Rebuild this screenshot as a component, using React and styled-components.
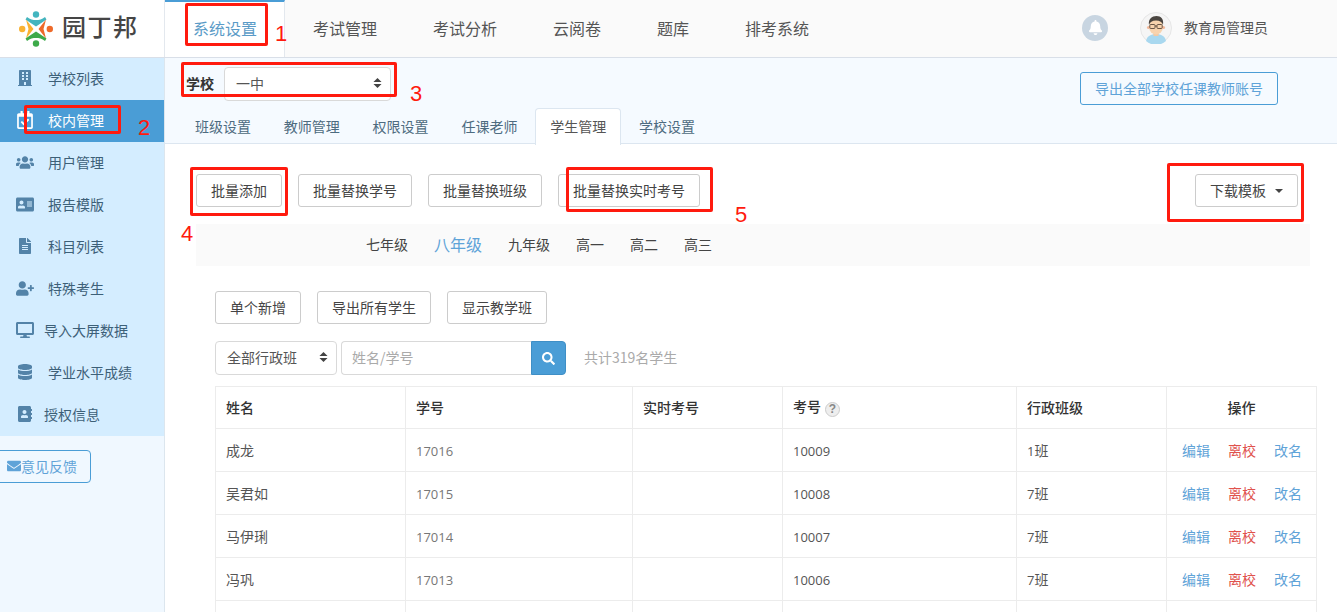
import React from "react";
import styled, { createGlobalStyle } from "styled-components";
import {
  FaBuilding, FaRegCalendarCheck, FaUsers, FaAddressCard, FaFileAlt, FaUserPlus,
  FaDesktop, FaDatabase, FaAddressBook, FaEnvelope, FaSearch, FaBell,
} from "react-icons/fa";

const Global = createGlobalStyle`
  html, body { margin: 0; padding: 0; background: #fff; }
  body { font-family: "Noto Sans CJK SC", "Noto Sans", sans-serif; font-size: 14px; color: #444; }
  * { box-sizing: border-box; }
`;

const Page = styled.div`
  position: relative;
  width: 1337px;
  height: 612px;
  overflow: hidden;
`;
const Header = styled.header`
  display: flex;
  height: 58px;
  background: #fafafa;
  border-bottom: 1px solid #d9dfe8;
`;
const LogoBox = styled.div`
  width: 165px;
  background: #fff;
  border-right: 1px solid #e3e8ee;
  display: flex;
  align-items: center;
  padding-left: 19px;
  gap: 9px;
`;
const LogoText = styled.span`
  font-size: 24px;
  font-weight: 500;
  color: #454545;
  letter-spacing: 1.5px;
  white-space: nowrap;
  line-height: 1;
  padding-bottom: 5px;
`;
const Nav = styled.nav`
  display: flex;
  flex: 1;
`;
const NavItem = styled.div`
  padding: 0 28px;
  font-size: 16px;
  line-height: 52px;
  height: 57px;
  white-space: nowrap;
  color: ${(p) => (p.$active ? "#5a9bc7" : "#555")};
  background: ${(p) => (p.$active ? "#fff" : "transparent")};
  border-top: 2px solid ${(p) => (p.$active ? "#4a9dd6" : "transparent")};
  ${(p) => p.$active && "border-right: 1px solid #e3e8ee; width: 120px; padding-right: 0;"}
`;
const UserArea = styled.div`
  display: flex;
  align-items: center;
  padding: 0 69px 2px 0;
`;
const BellBadge = styled.div`
  width: 26px;
  height: 26px;
  border-radius: 50%;
  background: #c8d5e1;
  color: #fff;
  display: flex;
  align-items: center;
  justify-content: center;
  font-size: 15px;
  margin-right: 32px;
`;
const UserName = styled.span`
  margin-left: 12px;
  padding-bottom: 1px;
  color: #555;
  font-size: 14px;
  white-space: nowrap;
`;
const Body = styled.div`
  display: flex;
  height: 554px;
`;
const Sidebar = styled.aside`
  width: 165px;
  flex: none;
  background: #f0f8ff;
  border-right: 1px solid #dce6ee;
`;
const SideList = styled.div`
  background: #d4edff;
`;
const SideItem = styled.div`
  display: flex;
  align-items: center;
  height: 42px;
  padding: 0 0 2px 16px;
  background: ${(p) => (p.$active ? "#4a9dd6" : "transparent")};
  color: ${(p) => (p.$active ? "#fff" : "#3d6078")};
  font-size: 14px;
  white-space: nowrap;
`;
const SideIcon = styled.span`
  width: 18px;
  margin-right: ${(p) => (p.$tight ? 10 : 14)}px;
  display: flex;
  justify-content: center;
  font-size: ${(p) => p.$size || 17}px;
  color: ${(p) => (p.$active ? "#fff" : "#5383a8")};
`;
const FeedbackButton = styled.button`
  display: flex;
  align-items: center;
  margin: 14px 0 0 -10px;
  width: 101px;
  height: 33px;
  padding: 0 0 2px 16px;
  border: 1px solid #4a9dd6;
  border-radius: 4px;
  background: transparent;
  color: #5fa3d8;
  font: inherit;
  font-size: 14px;
  white-space: nowrap;
`;
const Main = styled.main`
  flex: 1;
  min-width: 0;
`;
const SubHeader = styled.div`
  height: 86px;
  background: #f5faff;
  border-bottom: 1px solid #dce6f0;
  padding-top: 9px;
`;
const SchoolRow = styled.div`
  display: flex;
  justify-content: space-between;
  align-items: flex-start;
  height: 41px;
  padding: 0 59px 0 21px;
`;
const SchoolPick = styled.div`
  display: flex;
  align-items: center;
  gap: 10px;
`;
const SchoolLabel = styled.label`
  font-weight: 700;
  font-size: 14px;
  color: #333;
  padding-bottom: 2px;
`;
const SelectBox = styled.div`
  display: flex;
  align-items: center;
  justify-content: space-between;
  width: ${(p) => p.$width}px;
  height: 34px;
  padding: 0 8px 2px 11px;
  background: #fff;
  border: 1px solid #d9d9d9;
  border-radius: 4px;
  font-size: 14px;
  color: #555;
  white-space: nowrap;
`;
const ExportAll = styled.button`
  margin-top: 5px;
  width: 198px;
  height: 33px;
  background: transparent;
  border: 1px solid #4a9dd6;
  border-radius: 3px;
  color: #5fa3d8;
  font: inherit;
  font-size: 14px;
  padding: 0 0 1px;
`;
const Tabs = styled.div`
  display: flex;
  padding-left: 15px;
`;
const Tab = styled.div`
  width: 86px;
  height: 36px;
  margin-right: 2.8px;
  line-height: 35px;
  text-align: center;
  font-size: 14px;
  white-space: nowrap;
  color: ${(p) => (p.$active ? "#555" : "#4d6b80")};
  background: ${(p) => (p.$active ? "#fff" : "transparent")};
  border: 1px solid ${(p) => (p.$active ? "#dce6f0" : "transparent")};
  border-bottom: 0;
  border-radius: 4px 4px 0 0;
  ${(p) => p.$active && "position: relative; height: 37px;"}
`;
const Content = styled.div`
  padding: 30px 20px 0 50px;
`;
const ButtonRow = styled.div`
  display: flex;
  gap: 16px;
`;
const BatchRow = styled.div`
  display: flex;
  justify-content: space-between;
  margin: 0 19px 0 -19px;
`;
const Btn = styled.button`
  height: 33px;
  padding: 0 14px 2px;
  background: #fff;
  border: 1px solid #ccc;
  border-radius: 3px;
  color: #444;
  font: inherit;
  font-size: 14px;
  white-space: nowrap;
  display: flex;
  align-items: center;
`;
const Caret = styled.span`
  width: 0;
  height: 0;
  margin: 2px 0 0 9px;
  border-top: 4px solid #444;
  border-left: 4px solid transparent;
  border-right: 4px solid transparent;
`;
const GradeBar = styled.div`
  display: flex;
  align-items: center;
  gap: 26px;
  height: 42px;
  margin: 17px 7px 25px -19px;
  padding: 0 0 2px 170px;
  background: #fafafa;
`;
const Grade = styled.span`
  font-size: ${(p) => (p.$active ? 16 : 14)}px;
  color: ${(p) => (p.$active ? "#5fa3d8" : "#444")};
  white-space: nowrap;
`;
const SearchRow = styled.div`
  display: flex;
  align-items: center;
  margin: 17px 0 11px;
`;
const SearchInput = styled.input`
  width: 190px;
  height: 34px;
  margin-left: 4px;
  padding: 0 10px 2px;
  border: 1px solid #d9d9d9;
  border-right: 0;
  border-radius: 4px 0 0 4px;
  font: inherit;
  font-size: 14px;
  outline: none;
  &::placeholder { color: #aaa; }
`;
const SearchButton = styled.button`
  width: 35px;
  height: 34px;
  padding: 0;
  border: 1px solid #3f8fc6;
  border-radius: 0 4px 4px 0;
  background: #4a9dd6;
  color: #fff;
  font-size: 13px;
  display: flex;
  align-items: center;
  justify-content: center;
`;
const Total = styled.span`
  margin-left: 18px;
  padding-bottom: 2px;
  color: #aaa;
  font-size: 14px;
  white-space: nowrap;
`;
const Table = styled.table`
  width: 1102px;
  table-layout: fixed;
  border-collapse: collapse;
  font-size: 14px;
`;
const Th = styled.th`
  height: 42px;
  padding: 0 10px 2px;
  border: 1px solid #ececec;
  font-weight: 500;
  color: #333;
  text-align: ${(p) => p.$align || "left"};
`;
const Td = styled.td`
  height: 43px;
  padding: 0 10px;
  border: 1px solid #ececec;
  color: ${(p) => p.$color || "#555"};
  white-space: nowrap;
`;
const Digits = styled.span`
  font-family: "Open Sans", sans-serif;
  font-size: 13px;
`;
const HelpMark = styled.span`
  display: inline-flex;
  align-items: center;
  justify-content: center;
  width: 15px;
  height: 15px;
  margin-left: 4px;
  border: 1px solid #ccc;
  border-radius: 50%;
  background: #eee;
  color: #888;
  font: 700 12px "Liberation Sans", sans-serif;
  vertical-align: -1px;
`;
const Actions = styled.div`
  display: flex;
  gap: 18px;
  padding-left: 5px;
`;
const ActionLink = styled.a`
  color: ${(p) => (p.$danger ? "#e0524d" : "#5fa3d8")};
  white-space: nowrap;
`;
const Mark = styled.div`
  position: absolute;
  left: ${(p) => p.$x}px;
  top: ${(p) => p.$y}px;
  width: ${(p) => p.$w}px;
  height: ${(p) => p.$h}px;
  border: 3px solid #ff1a0e;
  border-radius: 2px;
  pointer-events: none;
`;
const MarkNum = styled.span`
  position: absolute;
  left: ${(p) => p.$x}px;
  top: ${(p) => p.$y}px;
  color: #ff1a0e;
  font: 22px/24px "Liberation Sans", sans-serif;
`;

const UpDown = () => (
  <svg width="9" height="12" viewBox="0 0 10 12" fill="#444">
    <path d="M5 0.5 9.5 5H0.5ZM0.5 7H9.5L5 11.5Z" />
  </svg>
);

const Logo = () => (
  <svg width="34" height="36" viewBox="0 0 34 36">
    <circle cx="17" cy="3.5" r="3.2" fill="#43b5bf" />
    <path d="M8 6C11 8.500 14 9 17 9S23 8.500 26 6L27.500 8.500 17 15.500 6.500 8.500Z" fill="#43b5bf" />
    <circle cx="3.200" cy="18" r="3.200" fill="#f9b233" />
    <path d="M7 8.500 14.500 18 7 27.500 9.500 18Z" fill="#f9b233" />
    <circle cx="30.800" cy="18" r="3.200" fill="#ee6a2a" />
    <path d="M27 8.500 19.500 18 27 27.500 24.500 18Z" fill="#ee6a2a" />
    <circle cx="17" cy="32.500" r="3.200" fill="#3daa4a" />
    <path d="M8 30C11 27.500 14 27 17 27S23 27.500 26 30L27.500 27.500 17 20.500 6.500 27.500Z" fill="#3daa4a" />
  </svg>
);

const Avatar = () => (
  <svg width="32" height="32" viewBox="0 0 32 32">
    <circle cx="16" cy="16" r="15.5" fill="#f5f5f5" stroke="#e6e6e6" />
    <path d="M6 29c1-5 5-7 10-7s9 2 10 7a15 15 0 0 1-20 0Z" fill="#a9d8ef" />
    <rect x="13.5" y="18" width="5" height="6" fill="#f2c9a3" />
    <ellipse cx="16" cy="14.5" rx="7" ry="8" fill="#f7d3ae" />
    <circle cx="8.5" cy="15.5" r="1.6" fill="#f3b99a" />
    <circle cx="23.5" cy="15.5" r="1.6" fill="#f3b99a" />
    <path d="M9 13c-1-6 3-9 7.500-9S24 7 23 13c-1-3-3-4.500-7-4.500S10 10 9 13Z" fill="#4a4540" />
    <rect x="9.800" y="12.500" width="5.200" height="4" rx="1" fill="none" stroke="#5a4a3c" strokeWidth="0.9" />
    <rect x="17" y="12.500" width="5.200" height="4" rx="1" fill="none" stroke="#5a4a3c" strokeWidth="0.9" />
    <path d="M15 14h2" stroke="#5a4a3c" strokeWidth="0.9" />
  </svg>
);

const navItems = ["考试管理", "考试分析", "云阅卷", "题库", "排考系统"];
const sideItems = [
  { label: "学校列表", Icon: FaBuilding, size: 16 },
  { label: "校内管理", Icon: FaRegCalendarCheck, size: 18, active: true },
  { label: "用户管理", Icon: FaUsers, size: 19 },
  { label: "报告模版", Icon: FaAddressCard, size: 19 },
  { label: "科目列表", Icon: FaFileAlt, size: 16 },
  { label: "特殊考生", Icon: FaUserPlus, size: 19 },
  { label: "导入大屏数据", Icon: FaDesktop, size: 18, tight: true },
  { label: "学业水平成绩", Icon: FaDatabase, size: 16 },
  { label: "授权信息", Icon: FaAddressBook, size: 16, tight: true },
];
const tabs = ["班级设置", "教师管理", "权限设置", "任课老师", "学生管理", "学校设置"];
const grades = ["七年级", "八年级", "九年级", "高一", "高二", "高三"];
const rows = [
  ["成龙", "17016", "10009", "1"],
  ["吴君如", "17015", "10008", "7"],
  ["马伊琍", "17014", "10007", "7"],
  ["冯巩", "17013", "10006", "7"],
];
const marks = [
  { x: 185, y: 3, w: 83, h: 43 },
  { x: 24, y: 105, w: 97, h: 29 },
  { x: 181, y: 62, w: 216, h: 35 },
  { x: 190, y: 167, w: 98, h: 49 },
  { x: 566, y: 167, w: 147, h: 45 },
  { x: 1167, y: 163, w: 137, h: 59 },
];
const nums = [
  { n: 1, x: 275, y: 22 },
  { n: 2, x: 138, y: 116 },
  { n: 3, x: 410, y: 82 },
  { n: 4, x: 181, y: 222 },
  { n: 5, x: 735, y: 203 },
];

export default function App() {
  return (
    <Page>
      <Global />
      <Header>
        <LogoBox>
          <Logo />
          <LogoText>园丁邦</LogoText>
        </LogoBox>
        <Nav>
          <NavItem $active>系统设置</NavItem>
          {navItems.map((n) => (
            <NavItem key={n}>{n}</NavItem>
          ))}
        </Nav>
        <UserArea>
          <BellBadge><FaBell /></BellBadge>
          <Avatar />
          <UserName>教育局管理员</UserName>
        </UserArea>
      </Header>
      <Body>
        <Sidebar>
          <SideList>
            {sideItems.map(({ label, Icon, size, active, tight }) => (
              <SideItem key={label} $active={active}>
                <SideIcon $size={size} $active={active} $tight={tight}><Icon /></SideIcon>
                {label}
              </SideItem>
            ))}
          </SideList>
          <FeedbackButton><FaEnvelope />意见反馈</FeedbackButton>
        </Sidebar>
        <Main>
          <SubHeader>
            <SchoolRow>
              <SchoolPick>
                <SchoolLabel>学校</SchoolLabel>
                <SelectBox $width={167}>一中<UpDown /></SelectBox>
              </SchoolPick>
              <ExportAll>导出全部学校任课教师账号</ExportAll>
            </SchoolRow>
            <Tabs>
              {tabs.map((t) => (
                <Tab key={t} $active={t === "学生管理"}>{t}</Tab>
              ))}
            </Tabs>
          </SubHeader>
          <Content>
            <BatchRow>
              <ButtonRow>
                <Btn>批量添加</Btn>
                <Btn>批量替换学号</Btn>
                <Btn>批量替换班级</Btn>
                <Btn>批量替换实时考号</Btn>
              </ButtonRow>
              <Btn>下载模板<Caret /></Btn>
            </BatchRow>
            <GradeBar>
              {grades.map((g) => (
                <Grade key={g} $active={g === "八年级"}>{g}</Grade>
              ))}
            </GradeBar>
            <ButtonRow>
              <Btn>单个新增</Btn>
              <Btn>导出所有学生</Btn>
              <Btn>显示教学班</Btn>
            </ButtonRow>
            <SearchRow>
              <SelectBox $width={122}>全部行政班<UpDown /></SelectBox>
              <SearchInput placeholder="姓名/学号" />
              <SearchButton><FaSearch /></SearchButton>
              <Total>共计319名学生</Total>
            </SearchRow>
            <Table>
              <colgroup>
                <col width="190" /><col width="227" /><col width="150" />
                <col width="234" /><col width="150" /><col width="150" />
              </colgroup>
              <thead>
                <tr>
                  <Th>姓名</Th>
                  <Th>学号</Th>
                  <Th>实时考号</Th>
                  <Th>考号<HelpMark>?</HelpMark></Th>
                  <Th>行政班级</Th>
                  <Th $align="center">操作</Th>
                </tr>
              </thead>
              <tbody>
                {rows.map(([name, id, exam, cls]) => (
                  <tr key={id}>
                    <Td>{name}</Td>
                    <Td $color="#777"><Digits>{id}</Digits></Td>
                    <Td />
                    <Td><Digits>{exam}</Digits></Td>
                    <Td><Digits>{cls}</Digits>班</Td>
                    <Td>
                      <Actions>
                        <ActionLink>编辑</ActionLink>
                        <ActionLink $danger>离校</ActionLink>
                        <ActionLink>改名</ActionLink>
                      </Actions>
                    </Td>
                  </tr>
                ))}
                <tr>
                  <Td /><Td /><Td /><Td /><Td /><Td />
                </tr>
              </tbody>
            </Table>
          </Content>
        </Main>
      </Body>
      {marks.map((m) => (
        <Mark key={`${m.x}-${m.y}`} $x={m.x} $y={m.y} $w={m.w} $h={m.h} />
      ))}
      {nums.map((m) => (
        <MarkNum key={m.n} $x={m.x} $y={m.y}>{m.n}</MarkNum>
      ))}
    </Page>
  );
}
